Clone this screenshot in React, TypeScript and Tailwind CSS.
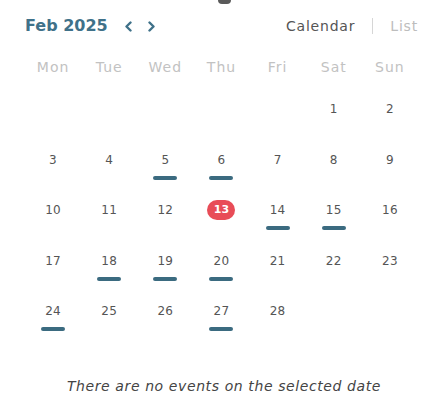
const events = new Set([5, 6, 14, 15, 18, 19, 20, 24, 27]);
const today = 13;
const weekdays = ["Mon", "Tue", "Wed", "Thu", "Fri", "Sat", "Sun"];

// Feb 2025 starts on a Saturday
const cells: (number | null)[] = [...Array(5).fill(null), ...Array.from({ length: 28 }, (_, i) => i + 1)];

export default function App() {
  return (
    <div className="w-[448px] h-[420px] bg-white overflow-hidden font-['DejaVu_Sans',sans-serif]">
      {/* handle peeking from above */}
      <div className="mx-auto w-[13px] h-[4px] rounded-b-full bg-[#5a5a5a]" />

      <div className="ml-[25px] w-[393px]">
        {/* header ------------------------------------------------------ */}
        <div className="mt-[10px] h-[24px] flex items-center justify-between">
          <div className="flex items-center">
            <span className="text-[16px] font-bold text-[#3f7189]">Feb 2025</span>
            <button className="ml-[16px] text-[#3f7189]">
              <svg width="9" height="11" viewBox="0 0 9 11" fill="none">
                <path d="M6.5 1.5 L2.5 5.5 L6.5 9.5" stroke="currentColor" strokeWidth="2.4" strokeLinecap="round" strokeLinejoin="round" />
              </svg>
            </button>
            <button className="ml-[14px] text-[#3f7189]">
              <svg width="9" height="11" viewBox="0 0 9 11" fill="none">
                <path d="M2.5 1.5 L6.5 5.5 L2.5 9.5" stroke="currentColor" strokeWidth="2.4" strokeLinecap="round" strokeLinejoin="round" />
              </svg>
            </button>
          </div>
          <div className="flex items-center text-[14px] tracking-[0.8px]">
            <span className="text-[#555]">Calendar</span>
            <span className="mx-[17px] w-px h-[16px] bg-[#d6d6d6]" />
            <span className="text-[#bdbdbd]">List</span>
          </div>
        </div>

        {/* weekdays ---------------------------------------------------- */}
        <div className="mt-[19px] grid grid-cols-7 h-[20px] items-center text-center text-[14px] tracking-[1px] text-[#c2c2c2]">
          {weekdays.map((d) => (
            <span key={d}>{d}</span>
          ))}
        </div>

        {/* days -------------------------------------------------------- */}
        <div className="mt-[22px] grid grid-cols-7">
          {cells.map((d, i) => (
            <div key={i} className="h-[50.5px] flex flex-col items-center">
              {d !== null && (
                <>
                  {d === today ? (
                    <span className="w-[28px] h-[20px] rounded-full bg-[#e84c57] text-white text-[11px] font-bold flex items-center justify-center">
                      {d}
                    </span>
                  ) : (
                    <span className="h-[20px] flex items-center text-[12px] tracking-[0.3px] text-[#555]">{d}</span>
                  )}
                  {events.has(d) && <span className="mt-[6px] w-[24px] h-[4px] rounded-full bg-[#3b6b80]" />}
                </>
              )}
            </div>
          ))}
        </div>
      </div>

      <p className="mt-[25px] h-[20px] flex items-center justify-center text-[14px] tracking-[0.6px] italic text-[#444]">
        There are no events on the selected date
      </p>
    </div>
  );
}
